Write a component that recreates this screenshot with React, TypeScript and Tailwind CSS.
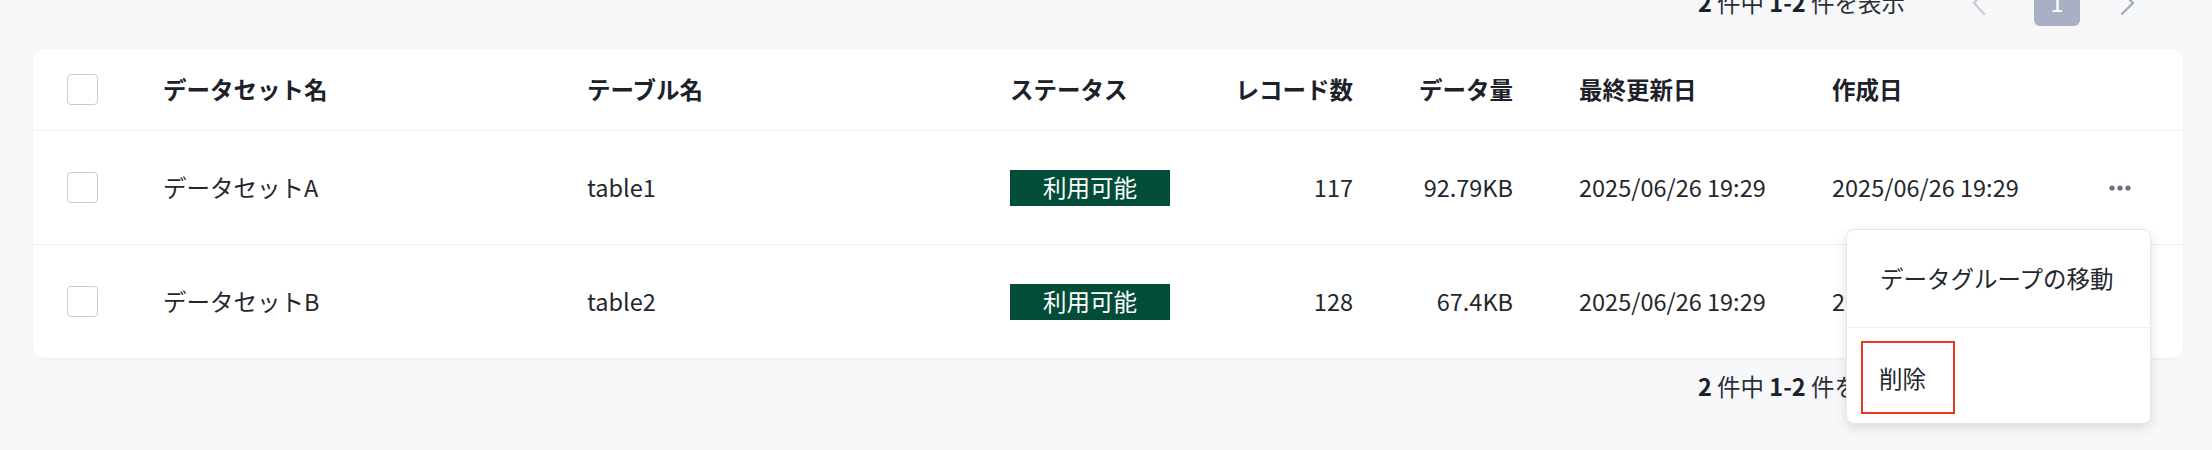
const cols =
  "grid grid-cols-[130px_424px_423px_223px_120px_160px_319px_251px_100px]";

const rows = [
  { name: "データセットA", table: "table1", count: "117", size: "92.79KB", updated: "2025/06/26 19:29", created: "2025/06/26 19:29" },
  { name: "データセットB", table: "table2", count: "128", size: "67.4KB", updated: "2025/06/26 19:29", created: "2025/06/26 19:29" },
];

function Checkbox() {
  return <div className="w-[31px] h-[31px] rounded-[4px] border-[1.5px] border-[#c9cbd0] bg-white" />;
}

function Pagination({ className }: { className: string }) {
  return (
    <div className={`h-[46px] flex items-center justify-end pr-[48px] ${className}`}>
      <span className="text-[23.5px] text-[#2b2f36]">
        <b className="font-bold text-[#1d2129]">2</b> 件中 <b className="font-bold text-[#1d2129]">1-2</b> 件を表示
      </span>
      <svg width="14" height="26" viewBox="0 0 14 26" className="ml-[67px]">
        <polyline points="12,2 2,13 12,24" fill="none" stroke="#c9ccd3" strokeWidth="2.4" strokeLinecap="round" strokeLinejoin="round" />
      </svg>
      <div className="ml-[48px] w-[46px] h-[46px] rounded-[6px] bg-[#a9afc5] flex items-center justify-center text-white text-[23.5px]">
        1
      </div>
      <svg width="15" height="26" viewBox="0 0 15 26" className="ml-[40px]">
        <polyline points="2,2 13,13 2,24" fill="none" stroke="#a8acb5" strokeWidth="2.4" strokeLinecap="round" strokeLinejoin="round" />
      </svg>
    </div>
  );
}

export default function App() {
  return (
    <div className="min-h-[450px] bg-[#f7f8fa] overflow-hidden font-['Noto_Sans_CJK_JP',sans-serif]">
      <div className="ml-[33px] w-[2150px]">
        <Pagination className="mt-[-20px] mb-[23px]" />

        <div className="relative bg-white rounded-[12px] shadow-[0_1px_3px_rgba(0,0,0,0.05)]">
          {/* header */}
          <div className={`${cols} h-[82px] border-b border-[#eeeff1] text-[23.5px] font-bold text-[#1d2129]`}>
            <div className="flex items-center pl-[34px]"><Checkbox /></div>
            <div className="flex items-center">データセット名</div>
            <div className="flex items-center">テーブル名</div>
            <div className="flex items-center">ステータス</div>
            <div className="flex items-center justify-end">レコード数</div>
            <div className="flex items-center justify-end">データ量</div>
            <div className="flex items-center pl-[66px]">最終更新日</div>
            <div className="flex items-center">作成日</div>
            <div />
          </div>

          {rows.map((r, i) => (
            <div
              key={r.name}
              className={`${cols} text-[23.5px] text-[#24272d] ${i === 0 ? "h-[114px] border-b border-[#eeeff1]" : "h-[113px]"}`}
            >
              <div className="flex items-center pl-[34px]"><Checkbox /></div>
              <div className="flex items-center">{r.name}</div>
              <div className="flex items-center">{r.table}</div>
              <div className="flex items-center">
                <span className="w-[160px] h-[36px] flex items-center justify-center bg-[#024d3a] text-white">利用可能</span>
              </div>
              <div className="flex items-center justify-end">{r.count}</div>
              <div className="flex items-center justify-end">{r.size}</div>
              <div className="flex items-center pl-[66px]">{r.updated}</div>
              <div className="flex items-center">{r.created}</div>
              <div className="flex items-center pl-[26px]">
                {i === 0 && (
                  <svg width="22" height="6" viewBox="0 0 22 6">
                    <circle cx="3" cy="3" r="2.6" fill="#6b717c" />
                    <circle cx="11" cy="3" r="2.6" fill="#6b717c" />
                    <circle cx="19" cy="3" r="2.6" fill="#6b717c" />
                  </svg>
                )}
              </div>
            </div>
          ))}

          {/* dropdown menu */}
          <div className="absolute left-[1813px] top-[180px] w-[305px] h-[195px] bg-white rounded-[8px] border border-[#e6e7ea] shadow-[0_4px_12px_rgba(0,0,0,0.12)] z-10 text-[23.5px] text-[#24272d]">
            <div className="h-[98px] flex items-center pl-[33px] border-b border-[#eceef0]">データグループの移動</div>
            <div className="relative h-[96px] flex items-center pl-[32px] pt-[6px]">
              削除
              <div className="absolute left-[14px] top-[13px] w-[94px] h-[73px] border-2 border-[#e8391f]" />
            </div>
          </div>
        </div>

        <Pagination className="mt-[6px]" />
      </div>
    </div>
  );
}
